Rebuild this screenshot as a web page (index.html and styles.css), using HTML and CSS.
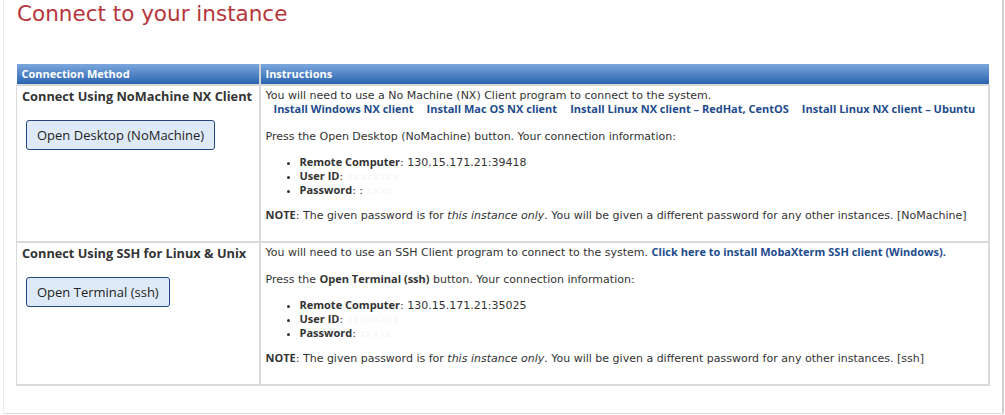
FILE: index.html
```html
<!DOCTYPE html>
<html lang="en">
<head>
<meta charset="utf-8">
<title>Connect to your instance</title>
<link rel="stylesheet" href="styles.css">
</head>
<body>
<div class="panel">
  <h1 class="title">Connect to your instance</h1>
  <table class="conn">
    <colgroup><col class="col-method"><col class="col-instr"></colgroup>
    <thead>
      <tr><th>Connection Method</th><th>Instructions</th></tr>
    </thead>
    <tbody>
      <tr class="row-nx">
        <td class="method">
          <div class="mname">Connect Using NoMachine NX Client</div>
          <button class="btn" type="button">Open Desktop (NoMachine)</button>
        </td>
        <td class="instr">
          <p>You will need to use a No Machine (NX) Client program to connect to the system.<br>
            <span class="links"><a href="#">Install Windows NX client</a><a href="#">Install Mac OS NX client</a><a href="#">Install Linux NX client – RedHat, CentOS</a><a href="#">Install Linux NX client – Ubuntu</a></span></p>
          <p>Press the Open Desktop (NoMachine) button. Your connection information:</p>
          <ul>
            <li><b>Remote Computer</b>: 130.15.171.21:39418</li>
            <li><b>User ID</b>: <span class="blur">xxxxxxxx</span></li>
            <li><b>Password</b>: : <span class="blur">xxxx</span></li>
          </ul>
          <p><b>NOTE</b>: The given password is for <i>this instance only</i>. You will be given a different password for any other instances. [NoMachine]</p>
        </td>
      </tr>
      <tr class="row-ssh">
        <td class="method">
          <div class="mname">Connect Using SSH for Linux &amp; Unix</div>
          <button class="btn" type="button">Open Terminal (ssh)</button>
        </td>
        <td class="instr">
          <p>You will need to use an SSH Client program to connect to the system. <a href="#">Click here to install MobaXterm SSH client (Windows).</a></p>
          <p>Press the <b>Open Terminal (ssh)</b> button. Your connection information:</p>
          <ul>
            <li><b>Remote Computer</b>: 130.15.171.21:35025</li>
            <li><b>User ID</b>: <span class="blur">xxxxxxxx</span></li>
            <li><b>Password</b>: <span class="blur">xxxxx</span></li>
          </ul>
          <p><b>NOTE</b>: The given password is for <i>this instance only</i>. You will be given a different password for any other instances. [ssh]</p>
        </td>
      </tr>
    </tbody>
  </table>
</div>
</body>
</html>
```
FILE: styles.css
```css
html, body {
  margin: 0;
  padding: 0;
  background: #ffffff;
}
body {
  font-family: "DejaVu Sans", "Open Sans", sans-serif;
  color: #333333;
  width: 1005px;
  height: 415px;
  overflow: hidden;
}
.panel {
  margin: 0 1px 1px 3px;
  border-left: 1px solid #ececec;
  border-right: 2px solid #cfcfcf;
  border-bottom: 1px solid #dcdcdc;
  padding: 0 12px 27px 12px;
}
.title {
  margin: 0;
  padding: 0 0 0 1px;
  font-weight: normal;
  font-size: 21.5px;
  line-height: 28px;
  color: #b5353a;
  height: 64px;
}
.conn {
  border-collapse: collapse;
  table-layout: fixed;
  width: 974px;
  font-size: 11px;
  line-height: 14px;
}
.col-method { width: 243px; }
.conn th {
  background: linear-gradient(#7ba7dd, #2a64b0);
  color: #ffffff;
  font-family: "Open Sans", "DejaVu Sans", sans-serif;
  font-weight: bold;
  font-size: 11px;
  text-align: left;
  height: 20px;
  padding: 0 5px;
  border-left: 2px solid #d4d4d4;
  white-space: nowrap;
}
.conn th:first-child { border-left: none; }
.conn td {
  border: 2px solid #dadada;
  vertical-align: top;
  padding: 3px 5px 5px 5px;
}
.conn td.method { border-left: 1px solid #dadada; }
.mname {
  font-family: "Open Sans", "DejaVu Sans", sans-serif;
  font-weight: bold;
  font-size: 12.75px;
  line-height: 14px;
  color: #333;
  white-space: nowrap;
}
.btn {
  margin: 17px 0 0 4px;
  font-family: "Open Sans", "DejaVu Sans", sans-serif;
  font-size: 13px;
  color: #222;
  background: #dfeaf8;
  border: 1px solid #24487f;
  border-radius: 3px;
  padding: 0 10px;
  height: 30px;
}
.instr p { margin: 0 0 13px 0; }
.links {
  display: inline-flex;
  gap: 13px;
  padding-left: 8px;
  white-space: nowrap;
  line-height: 1;
}
a {
  font-family: "Open Sans", "DejaVu Sans", sans-serif;
  color: #1d4b8c;
  font-weight: bold;
  text-decoration: none;
  line-height: 1;
}
.instr b {
  font-family: "Open Sans", "DejaVu Sans", sans-serif;
  color: #333;
  line-height: 1;
}
.instr ul {
  margin: -1px 0 11px 0;
  padding-left: 34px;
}
.blur { color: #f6f6f6; }
```
